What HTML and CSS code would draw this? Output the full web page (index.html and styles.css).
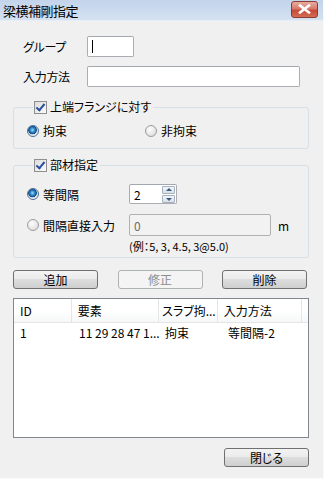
FILE: index.html
```html
<!DOCTYPE html>
<html lang="ja">
  <head>
    <meta charset="UTF-8" />
    <meta name="viewport" content="width=device-width, initial-scale=1.0" />
    <title>梁横補剛指定</title>
    <link rel="stylesheet" href="styles.css">
  </head>
  <body>
    <div class="window">
      <div class="titlebar">
        <span class="title">梁横補剛指定</span>
        <span class="close-btn">
          <svg width="13" height="10" viewBox="0 0 13 10">
            <path d="M2 1.5 L11 8.5 M11 1.5 L2 8.5" stroke="#fff" stroke-width="2.6" stroke-linecap="square" />
          </svg>
        </span>
      </div>

      <div class="content">
        <div class="field-row">
          <span class="field-label">グループ</span>
          <span class="textbox textbox-short"><span class="caret"></span></span>
        </div>
        <div class="field-row row-gap">
          <span class="field-label">入力方法</span>
          <span class="textbox textbox-wide"></span>
        </div>

        <fieldset class="group group-flange">
          <legend class="group-title"><span class="checkbox checked"></span>上端フランジに対す</legend>
          <div class="radio-line">
            <span class="radio-item item-fixed"><span class="radio selected"></span>拘束</span>
            <span class="radio-item"><span class="radio"></span>非拘束</span>
          </div>
        </fieldset>

        <fieldset class="group group-member">
          <legend class="group-title"><span class="checkbox checked"></span>部材指定</legend>
          <div class="radio-line">
            <span class="radio-item item-wide"><span class="radio selected"></span>等間隔</span>
            <span class="textbox spin">
              <span class="spin-value">2</span>
              <span class="spin-arrows">
                <span class="arrow arrow-up"></span>
                <span class="arrow arrow-down"></span>
              </span>
            </span>
          </div>
          <div class="radio-line line-gap">
            <span class="radio-item item-wide"><span class="radio"></span>間隔直接入力</span>
            <span class="textbox textbox-disabled">0</span>
            <span class="unit">m</span>
          </div>
          <div class="example">(例：5, 3, 4.5, 3@5.0)</div>
        </fieldset>

        <div class="button-row">
          <button class="btn">追加</button>
          <button class="btn" disabled>修正</button>
          <button class="btn">削除</button>
        </div>

        <div class="listview">
          <div class="list-header">
            <span class="col col-id">ID</span>
            <span class="col col-elem">要素</span>
            <span class="col col-slab">スラブ拘...</span>
            <span class="col col-method">入力方法</span>
            <span class="col col-rest"></span>
          </div>
          <div class="list-row">
            <span class="col col-id">1</span>
            <span class="col col-elem">11 29 28 47 1...</span>
            <span class="col col-slab">拘束</span>
            <span class="col col-method">等間隔-2</span>
          </div>
        </div>

        <div class="footer">
          <button class="btn">閉じる</button>
        </div>
      </div>
    </div>
  </body>
</html>
```

FILE: styles.css
```css
* {
  box-sizing: border-box;
}
body {
  margin: 0;
  background: #f0f0f0;
  font-family: "Noto Sans CJK JP", sans-serif;
  font-size: 12px;
  font-feature-settings: "palt";
  color: #000;
}
.window {
  width: 324px;
  height: 479px;
  display: flex;
  flex-direction: column;
  border-right: 1px solid #fafafa;
  border-bottom: 1px solid #fafafa;
}

/* title bar */
.titlebar {
  height: 21px;
  flex-shrink: 0;
  display: flex;
  align-items: center;
  justify-content: space-between;
  padding: 0 5px 0 3px;
  background: linear-gradient(#c3d4ea, #d4e1f1);
  border-bottom: 1px solid #e6edf6;
}
.title {
  font-size: 13px;
  letter-spacing: -0.5px;
}
.close-btn {
  width: 27px;
  height: 17px;
  margin-top: -2px;
  display: flex;
  align-items: center;
  justify-content: center;
  border: 1px solid #8b3b30;
  border-radius: 3px;
  background: linear-gradient(#e9ac9f, #d7796a 45%, #c64a36 55%, #d36c55);
}

.content {
  display: flex;
  flex-direction: column;
  padding: 15px 14px 0 13px;
}

/* top fields */
.field-row {
  display: flex;
  align-items: center;
}
.row-gap {
  margin-top: 9px;
}
.field-label {
  width: 74px;
  padding-left: 10px;
  letter-spacing: -0.3px;
}
.textbox {
  height: 21px;
  display: flex;
  align-items: center;
  background: #fff;
  border: 1px solid #abadb3;
  border-top-color: #a3a7b0;
  border-radius: 2px;
}
.textbox-short {
  width: 47px;
}
.textbox-wide {
  width: 213px;
}
.caret {
  width: 1px;
  height: 13px;
  margin-left: 4px;
  background: #000;
}

/* group boxes */
.group {
  margin: 0;
  min-width: 0;
  border: 1px solid #d5dfe5;
  border-radius: 3px;
}
.group-flange {
  margin-top: 13px;
  padding: 8px 0 9px 13px;
}
.group-member {
  margin-top: 9px;
  padding: 12px 0 2px 13px;
}
.group-title {
  display: flex;
  align-items: center;
  margin-left: 6px;
  padding: 0 2px 0 1px;
  height: 14px;
  line-height: 14px;
}
.checkbox {
  width: 13px;
  height: 13px;
  margin-right: 3px;
  border: 1px solid #8f8f8f;
  background: linear-gradient(135deg, #dcdcdc, #fbfbfb);
  position: relative;
}
.checkbox.checked::after {
  content: "";
  position: absolute;
  left: 3px;
  top: 0px;
  width: 3px;
  height: 7px;
  border: solid #2a4f9e;
  border-width: 0 2px 2px 0;
  transform: rotate(40deg);
}

.radio-line {
  display: flex;
  align-items: center;
}
.line-gap {
  margin-top: 10px;
}
.radio-item {
  display: flex;
  align-items: center;
}
.item-fixed {
  width: 118px;
}
.item-wide {
  width: 102px;
}
.radio {
  width: 12px;
  height: 12px;
  margin-right: 4px;
  border: 1px solid #9c9c9c;
  border-radius: 50%;
  background: radial-gradient(circle at 40% 35%, #fdfdfd, #d6d6d6);
}
.radio.selected {
  border-color: #4e6f93;
  background: radial-gradient(circle at 45% 40%, #9ce0ff 0, #3a8fcf 2px, #0f4c88 4px, #cfd9e4 4.6px, #f4f4f4 6px);
}

.spin {
  width: 48px;
  height: 20px;
  justify-content: space-between;
  padding: 0 1px 0 4px;
}
.spin-arrows {
  display: flex;
  flex-direction: column;
  gap: 1px;
}
.arrow {
  width: 13px;
  height: 8px;
  border: 1px solid #a6b1bf;
  border-radius: 1px;
  background: linear-gradient(#f3f6f9, #d8e0e9);
  position: relative;
}
.arrow::after {
  content: "";
  position: absolute;
  left: 3px;
  border-left: 3px solid transparent;
  border-right: 3px solid transparent;
}
.arrow-up::after {
  top: 1px;
  border-bottom: 3px solid #3b5a80;
}
.arrow-down::after {
  top: 2px;
  border-top: 3px solid #3b5a80;
}
.textbox-disabled {
  width: 142px;
  height: 22px;
  padding-left: 4px;
  background: #f2f2f2;
  border-color: #afb1b5;
  color: #6d6d6d;
}
.unit {
  margin-left: 7px;
}
.example {
  margin: 2px 0 0 102px;
  height: 17px;
  line-height: 17px;
  font-size: 11px;
}

/* buttons */
.button-row {
  display: flex;
  justify-content: space-between;
  margin: 12px 2px 0 0;
}
.btn {
  width: 85px;
  height: 19px;
  padding: 0;
  font-family: inherit;
  font-size: 12px;
  font-feature-settings: "palt";
  color: #000;
  border: 1px solid #707070;
  border-radius: 3px;
  background: linear-gradient(#f3f3f3, #ebebeb 45%, #dddddd 50%, #cfcfcf);
}
.btn:disabled {
  color: #8d8d8d;
  border-color: #adb2b5;
  background: #f4f4f4;
}

/* list */
.listview {
  margin-top: 9px;
  height: 140px;
  background: #fff;
  border: 1px solid #828790;
}
.list-header,
.list-row {
  display: flex;
}
.list-header {
  height: 24px;
  align-items: center;
  background: linear-gradient(#fff 50%, #f6f7f8);
  border-bottom: 1px solid #e5e5e5;
}
.list-header .col {
  border-right: 1px solid #e5e5e5;
  height: 23px;
  line-height: 23px;
}
.list-row {
  height: 19px;
  line-height: 19px;
}
.col {
  padding-left: 6px;
  white-space: nowrap;
  overflow: hidden;
}
.col-id {
  width: 59px;
}
.col-elem {
  width: 89px;
}
.col-slab {
  width: 60px;
  padding-left: 3px;
}
.col-method {
  width: 86px;
}
.list-header .col-rest {
  flex: 1;
  border-right: none;
}

.footer {
  display: flex;
  justify-content: flex-end;
  margin-top: 10px;
}
```
